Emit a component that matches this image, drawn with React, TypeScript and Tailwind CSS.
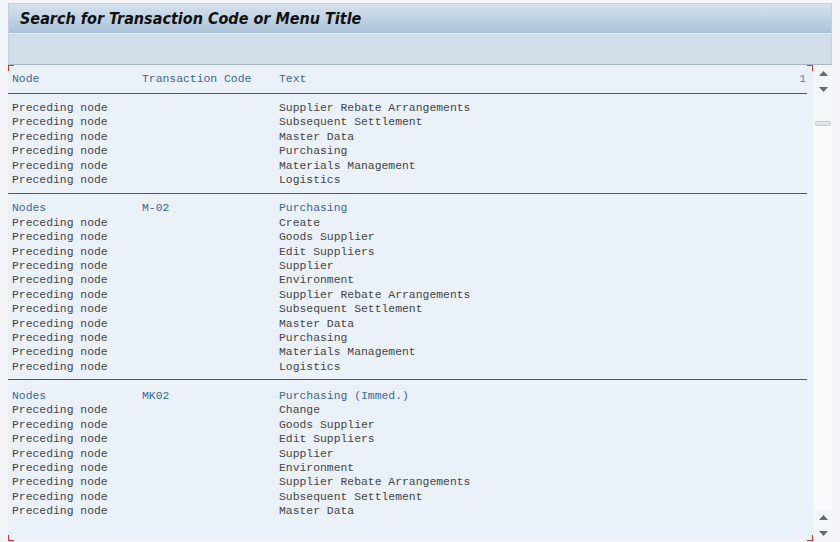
import React from 'react';

type Row = { node: string; code?: string; text: string; head?: boolean };

const tail = [
  'Supplier Rebate Arrangements',
  'Subsequent Settlement',
  'Master Data',
  'Purchasing',
  'Materials Management',
  'Logistics',
];

const pre = (t: string): Row => ({ node: 'Preceding node', text: t });

const groups: { pad: string; rows: Row[] }[] = [
  { pad: 'pt-[7px] pb-[5px]', rows: tail.map(pre) },
  {
    pad: 'pt-[8px] pb-[5px]',
    rows: [
      { node: 'Nodes', code: 'M-02', text: 'Purchasing', head: true },
      ...['Create', 'Goods Supplier', 'Edit Suppliers', 'Supplier', 'Environment', ...tail].map(pre),
    ],
  },
  {
    pad: 'pt-[9px] pb-[4px]',
    rows: [
      { node: 'Nodes', code: 'MK02', text: 'Purchasing (Immed.)', head: true },
      ...[
        'Change',
        'Goods Supplier',
        'Edit Suppliers',
        'Supplier',
        'Environment',
        'Supplier Rebate Arrangements',
        'Subsequent Settlement',
        'Master Data',
      ].map(pre),
    ],
  },
];

function Line({ r }: { r: Row }) {
  return (
    <div className={`flex h-[14.4px] items-center ${r.head ? 'text-[#3a679f]' : 'text-[#454545]'}`}>
      <span className="w-[130px] shrink-0 whitespace-pre">{r.node}</span>
      <span className="w-[137px] shrink-0 whitespace-pre">{r.code ?? ''}</span>
      <span className="whitespace-pre">{r.text}</span>
    </div>
  );
}

function Arrow({ up }: { up?: boolean }) {
  return (
    <div className="flex h-[16px] items-center justify-center">
      <svg width="9" height="5" viewBox="0 0 9 5">
        <path d={up ? 'M0 5 L4.5 0 L9 5 Z' : 'M0 0 L4.5 5 L9 0 Z'} fill="#5e6b78" />
      </svg>
    </div>
  );
}

export default function App() {
  return (
    <div className="w-[840px] h-[542px] overflow-hidden bg-[#f3f5f8] pl-[8px] pr-[8px] pt-[3px] flex flex-col">
      <div className="h-[30px] shrink-0 border border-b-0 border-[#c3d0dd] bg-gradient-to-b from-[#d6e2ed] to-[#abc3da] flex items-center pl-[11px]">
        <span className="text-[16px] font-bold italic text-[#111] [font-family:'DejaVu_Sans_Condensed','DejaVu_Sans',Tahoma,sans-serif] [font-stretch:condensed]">
          Search for Transaction Code or Menu Title
        </span>
      </div>
      <div className="h-[32px] shrink-0 border-x border-t border-t-[#e6edf4] border-x-[#c3d0dd] border-b border-b-[#a9b6c3] bg-[#d1dde8]" />
      <div className="flex flex-1 min-h-0 pb-[1px]">
        <div className="relative flex-1 bg-[#ebf1f8] pt-[7px] pr-[6px] text-[11.4px] [font-family:'Liberation_Mono','Courier_New',monospace]">
          <span className="absolute left-0 top-0 h-[6px] w-[6px] border-l border-t border-[#d9342b]" />
          <span className="absolute right-0 top-0 h-[6px] w-[6px] border-r border-t border-[#d9342b]" />
          <span className="absolute left-0 bottom-0 h-[6px] w-[6px] border-l border-b border-[#d9342b]" />
          <span className="absolute right-0 bottom-0 h-[6px] w-[6px] border-r border-b border-[#d9342b]" />
          <div className="flex h-[14.4px] items-center pl-[4px] text-[#3a679f]">
            <span className="w-[130px] shrink-0">Node</span>
            <span className="w-[137px] shrink-0">Transaction Code</span>
            <span className="flex-1">Text</span>
            <span className="pr-[1px] text-[#6283a8]">1</span>
          </div>
          <div className="mt-[7px] border-t border-[#555]" />
          {groups.map((g, i) => (
            <div key={i} className={i > 0 ? 'border-t border-[#555]' : ''}>
              <div className={`pl-[4px] ${g.pad}`}>
                {g.rows.map((r, j) => (
                  <Line key={j} r={r} />
                ))}
              </div>
            </div>
          ))}
        </div>
        <div className="ml-[1px] w-[18px] shrink-0 flex flex-col bg-[#f4f7fa]">
          <Arrow up />
          <Arrow />
          <div className="mt-[24px] mx-[1px] h-[5px] rounded-[2px] border border-[#c4ccd4] bg-[#dfe4ea]" />
          <div className="flex-1 bg-[#f8fafc]" />
          <Arrow up />
          <Arrow />
        </div>
      </div>
    </div>
  );
}
